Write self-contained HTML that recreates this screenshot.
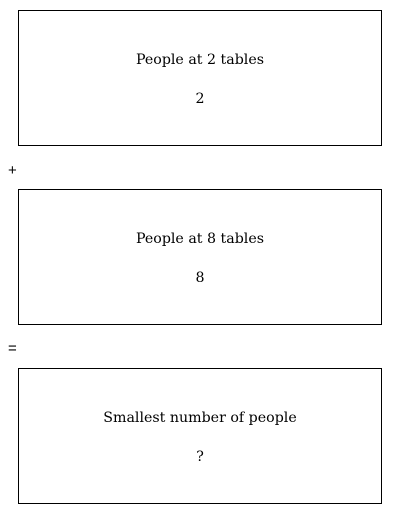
<!DOCTYPE html>
<html><head><style>
body{margin:0;width:400px;height:514px;background:#fff;font-family:"DejaVu Serif",serif;color:#000;position:relative;overflow:hidden}
.b{position:absolute;left:18px;width:362px;height:134px;border:1px solid #000;text-align:center;font-size:14.2px}
.t{position:absolute;left:0;right:0;top:39px;line-height:20px}
.n{position:absolute;left:0;right:0;top:78px;line-height:20px}
.op{position:absolute;left:8px;font-size:15px;line-height:16px;font-family:"Liberation Sans",sans-serif}
</style></head><body>
<div class="b" style="top:10px"><div class="t">People at 2 tables</div><div class="n">2</div></div>
<div class="op" style="top:163px">+</div>
<div class="b" style="top:189px"><div class="t">People at 8 tables</div><div class="n">8</div></div>
<div class="op" style="top:341px">=</div>
<div class="b" style="top:368px"><div class="t">Smallest number of people</div><div class="n">?</div></div>
</body></html>
